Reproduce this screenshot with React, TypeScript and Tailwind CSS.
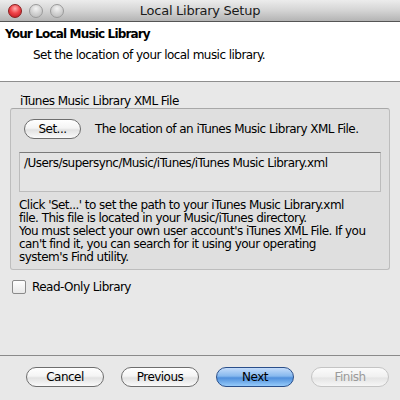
import React from "react";

function Light({ red }: { red?: boolean }) {
  return (
    <div
      className={
        red
          ? "w-[14px] h-[14px] rounded-full border border-[#8a1d1d] bg-[radial-gradient(circle_at_50%_30%,#ffb0b0_0%,#f0454a_45%,#b8121a_100%)]"
          : "w-[14px] h-[14px] rounded-full border border-[#9a9a9a] bg-[radial-gradient(circle_at_50%_30%,#f4f4f4_0%,#d2d2d2_50%,#b6b6b6_100%)]"
      }
    />
  );
}

function AquaButton({
  children,
  className = "",
  variant = "normal",
}: {
  children: React.ReactNode;
  className?: string;
  variant?: "normal" | "primary" | "disabled";
}) {
  const base =
    "h-[20px] rounded-full flex items-center justify-center text-[12px] leading-none";
  const v =
    variant === "primary"
      ? "border border-[#2a4f8a] bg-[linear-gradient(to_bottom,#c4dcfa_0%,#86b8ee_45%,#4f8fdc_55%,#96cbfa_100%)] text-black"
      : variant === "disabled"
      ? "border border-[#c4c4c4] bg-[linear-gradient(to_bottom,#fbfbfb_0%,#f0f0f0_50%,#e4e4e4_55%,#f6f6f6_100%)] text-[#9a9a9a]"
      : "border border-[#6e6e6e] bg-[linear-gradient(to_bottom,#ffffff_0%,#f4f4f4_45%,#e2e2e2_55%,#fafafa_100%)] text-black";
  return <div className={`${base} ${v} ${className}`}>{children}</div>;
}

export default function App() {
  return (
    <div className="w-[400px] h-[400px] overflow-hidden bg-[#e8e8e8] flex flex-col font-['DejaVu_Sans',sans-serif] text-[12px] text-black tracking-[-0.045em]">
      {/* Title bar */}
      <div className="h-[22px] shrink-0 relative flex items-center border-b border-[#555] bg-[linear-gradient(to_bottom,#ececec_0%,#d4d4d4_50%,#b4b4b4_100%)]">
        <div className="flex gap-[7px] pl-[8px]">
          <Light red />
          <Light />
          <Light />
        </div>
        <div className="absolute inset-0 flex items-center justify-center text-[13px] text-[#1a1a1a] tracking-[-0.02em]">
          Local Library Setup
        </div>
      </div>

      {/* Header */}
      <div className="h-[60px] shrink-0 bg-white border-b border-[#8e8e8e] flex flex-col">
        <div className="pl-[5px] pt-[5px] font-bold text-[12px] leading-[15px] tracking-[-0.07em]">
          Your Local Music Library
        </div>
        <div className="pl-[33px] pt-[6px] text-[12px] leading-[15px]">
          Set the location of your local music library.
        </div>
      </div>

      {/* Body */}
      <div className="flex-1 flex flex-col">
        <div className="pl-[20px] pt-[12px] leading-[14px]">iTunes Music Library XML File</div>
        <div className="ml-[10px] mt-[0px] w-[380px] h-[162px] rounded-[3px] border border-[#bdbdbd] border-t-[#a8a8a8] bg-[#dfdfdf] flex flex-col">
          <div className="flex items-center pl-[13px] pt-[10px]">
            <AquaButton className="w-[57px]">Set...</AquaButton>
            <div className="pl-[14px]">The location of an iTunes Music Library XML File.</div>
          </div>
          <div className="ml-[8px] mt-[13px] w-[362px] h-[40px] bg-[#e4e4e4] border border-[#bcbcbc] border-t-[#7a7a7a] pl-[4px] pt-[3px] leading-[15px]">
            /Users/supersync/Music/iTunes/iTunes Music Library.xml
          </div>
          <div className="pl-[8px] pt-[7px] leading-[13px]">
            Click 'Set...' to set the path to your iTunes Music Library.xml
            <br />
            file. This file is located in your Music/iTunes directory.
            <br />
            You must select your own user account's iTunes XML File. If you
            <br />
            can't find it, you can search for it using your operating
            <br />
            system's Find utility.
          </div>
        </div>
        <div className="flex items-center pl-[12px] pt-[8px]">
          <div className="w-[14px] h-[14px] rounded-[2px] border border-[#8a8a8a] bg-[linear-gradient(to_bottom,#ffffff,#e8e8e8)]" />
          <div className="pl-[6px]">Read-Only Library</div>
        </div>
        <div className="flex-1" />
        <div className="border-t border-[#8a8a8a]" />
        <div className="h-[44px] flex items-start pt-[11px] pl-[26px] gap-[17px]">
          <AquaButton className="w-[78px]">Cancel</AquaButton>
          <AquaButton className="w-[78px]">Previous</AquaButton>
          <AquaButton className="w-[78px]" variant="primary">Next</AquaButton>
          <AquaButton className="w-[78px]" variant="disabled">Finish</AquaButton>
        </div>
      </div>
    </div>
  );
}
